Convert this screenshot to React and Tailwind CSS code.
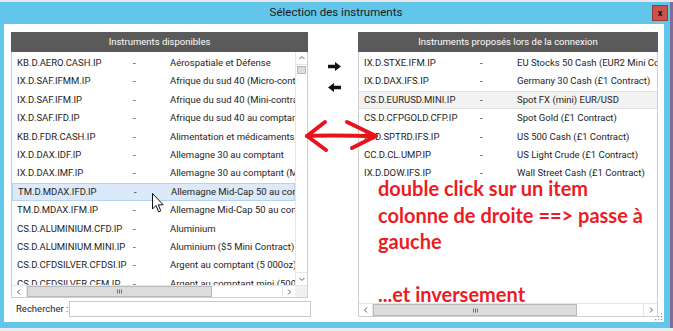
import React from "react";

const leftRows = [
  ["KB.D.AERO.CASH.IP", "Aérospatiale et Défense"],
  ["IX.D.SAF.IFMM.IP", "Afrique du sud 40 (Micro-contrat)"],
  ["IX.D.SAF.IFM.IP", "Afrique du sud 40 (Mini-contrat)"],
  ["IX.D.SAF.IFD.IP", "Afrique du sud 40 au comptant"],
  ["KB.D.FDR.CASH.IP", "Alimentation et médicaments"],
  ["IX.D.DAX.IDF.IP", "Allemagne 30 au comptant"],
  ["IX.D.DAX.IMF.IP", "Allemagne 30 au comptant (Mini-contrat)"],
  ["TM.D.MDAX.IFD.IP", "Allemagne Mid-Cap 50 au comptant"],
  ["TM.D.MDAX.IFM.IP", "Allemagne Mid-Cap 50 au comptant (Mini)"],
  ["CS.D.ALUMINIUM.CFD.IP", "Aluminium"],
  ["CS.D.ALUMINIUM.MINI.IP", "Aluminium ($5 Mini Contract)"],
  ["CS.D.CFDSILVER.CFDSI.IP", "Argent au comptant (5 000oz)"],
  ["CS.D.CFDSILVER.CFM.IP", "Argent au comptant mini (500oz)"],
];

const rightRows = [
  ["IX.D.STXE.IFM.IP", "EU Stocks 50 Cash (EUR2 Mini Contract)"],
  ["IX.D.DAX.IFS.IP", "Germany 30 Cash (£1 Contract)"],
  ["CS.D.EURUSD.MINI.IP", "Spot FX (mini) EUR/USD"],
  ["CS.D.CFPGOLD.CFP.IP", "Spot Gold (£1 Contract)"],
  ["IX.D.SPTRD.IFS.IP", "US 500 Cash (£1 Contract)"],
  ["CC.D.CL.UMP.IP", "US Light Crude (£1 Contract)"],
  ["IX.D.DOW.IFS.IP", "Wall Street Cash (£1 Contract)"],
];

function Row({ code, desc, variant }) {
  let cls = "border-y border-transparent";
  if (variant === "blue") cls = "border border-[#b3d4f2] bg-[#dbe9f8]";
  if (variant === "gray") cls = "border-y border-[#e0e0e0] bg-[#f2f2f2]";
  return (
    <div className={`flex h-[18.4px] shrink-0 items-center whitespace-nowrap pl-[5px] text-[#1e1e1e] ${cls}`}>
      <div className="w-[116px] shrink-0">{code}</div>
      <div className="w-[37px] shrink-0">-</div>
      <div className="shrink-0">{desc}</div>
    </div>
  );
}

function Chevron({ dir }) {
  const paths = {
    up: "M1.5 5 L4 2.5 L6.5 5",
    down: "M1.5 3 L4 5.5 L6.5 3",
    left: "M5 1.5 L2.5 4 L5 6.5",
    right: "M3 1.5 L5.5 4 L3 6.5",
  };
  return (
    <svg width="8" height="8" viewBox="0 0 8 8">
      <path d={paths[dir]} fill="none" stroke="#606060" strokeWidth="1" />
    </svg>
  );
}

function Grip() {
  return (
    <svg width="7" height="5" viewBox="0 0 7 5">
      <path d="M1.5 0.5 V4.5 M3.5 0.5 V4.5 M5.5 0.5 V4.5" stroke="#707070" strokeWidth="1" />
    </svg>
  );
}

function BlackArrow({ flip }) {
  return (
    <svg width="13" height="9" viewBox="0 0 13 9" className={flip ? "-scale-x-100" : ""}>
      <polygon points="0,2.8 7,2.8 7,0 13,4.5 7,9 7,6.2 0,6.2" fill="#111" />
    </svg>
  );
}

export default function App() {
  return (
    <div className="relative flex h-[331px] w-[673px] flex-col overflow-hidden bg-[#e4e8ec] font-[family-name:Roboto,sans-serif] text-[9.5px]">
      <div className="h-[2px] shrink-0 bg-[#e8e8e8]" />
      <div className="flex h-[326px] shrink-0">
        {/* window */}
        <div className="flex w-[670px] flex-col bg-[#61c6ea] pb-[6px] pl-[4px] pr-[6px]">
          {/* title bar */}
          <div className="grid h-[22px] shrink-0 grid-cols-[1fr_auto_1fr] items-center">
            <div />
            <div className="pl-[4px] text-[11.5px] text-[#1b1b1b]">Sélection des instruments</div>
            <div className="flex justify-end pr-[-2px]">
              <div className="mr-[-4px] flex h-[16px] w-[16px] items-center justify-center border border-[#9a3a36] bg-[#c9534c] text-[9px] font-bold leading-none text-[#111]">
                x
              </div>
            </div>
          </div>
          {/* body */}
          <div className="relative flex h-[298px] shrink-0 bg-white pl-[7px] pr-[6px] pt-[8px]">
            {/* left panel */}
            <div className="flex w-[297px] flex-col">
              <div className="flex h-[20px] shrink-0 items-center justify-center bg-[#5a5a5a] text-white">
                Instruments disponibles
              </div>
              <div className="flex h-[246px] shrink-0 flex-col border border-t-0 border-[#cfcfcf]">
                <div className="flex min-h-0 flex-1">
                  <div className="flex min-w-0 flex-1 flex-col overflow-hidden pt-[2px]">
                    {leftRows.map((r, i) => (
                      <Row key={r[0]} code={r[0]} desc={r[1]} variant={i === 7 ? "blue" : ""} />
                    ))}
                  </div>
                  {/* vertical scrollbar */}
                  <div className="flex w-[12px] shrink-0 flex-col border-l border-[#e6e6e6] bg-white">
                    <div className="flex h-[13px] items-center justify-center border-b border-[#e6e6e6]">
                      <Chevron dir="up" />
                    </div>
                    <div className="mx-[1px] mt-[1px] h-[8px] border border-[#b9b9b9] bg-[#dcdcdc]" />
                    <div className="flex-1" />
                    <div className="flex h-[13px] items-center justify-center border-t border-[#e6e6e6]">
                      <Chevron dir="down" />
                    </div>
                  </div>
                </div>
                {/* horizontal scrollbar */}
                <div className="flex h-[12px] shrink-0 border-t border-[#e6e6e6]">
                  <div className="flex w-[15px] items-center justify-center border-r border-[#e6e6e6] bg-white">
                    <Chevron dir="left" />
                  </div>
                  <div className="flex w-[185px] items-center justify-center border border-[#b9b9b9] bg-[#dcdcdc]">
                    <Grip />
                  </div>
                  <div className="flex-1 bg-white" />
                  <div className="flex w-[13px] items-center justify-center border-l border-[#e6e6e6] bg-white">
                    <Chevron dir="right" />
                  </div>
                  <div className="w-[12px] bg-[#f0f0f0]" />
                </div>
              </div>
              <div className="mt-[3px] flex h-[16px] w-[300px] shrink-0 items-center">
                <div className="w-[58px] shrink-0 pl-[5px] text-[#1e1e1e]">Rechercher :</div>
                <div className="h-[16px] flex-1 border border-[#c8c8c8] bg-white" />
              </div>
            </div>
            {/* middle arrows */}
            <div className="flex w-[50px] shrink-0 flex-col items-center gap-[12px] pl-[2px] pt-[30px]">
              <BlackArrow />
              <BlackArrow flip />
            </div>
            {/* right panel */}
            <div className="flex w-[300px] flex-col">
              <div className="flex h-[20px] shrink-0 items-center justify-center bg-[#5a5a5a] text-white">
                Instruments proposés lors de la connexion
              </div>
              <div className="flex h-[265px] shrink-0 flex-col border border-t-0 border-[#cfcfcf]">
                <div className="flex min-h-0 flex-1 flex-col overflow-hidden pt-[2px]">
                  {rightRows.map((r, i) => (
                    <Row key={r[0]} code={r[0]} desc={r[1]} variant={i === 2 ? "gray" : ""} />
                  ))}
                </div>
                <div className="flex h-[13px] shrink-0 border-t border-[#e6e6e6]">
                  <div className="flex w-[14px] items-center justify-center border-r border-[#e6e6e6] bg-white">
                    <Chevron dir="left" />
                  </div>
                  <div className="flex w-[204px] items-center justify-center border border-[#b9b9b9] bg-[#dcdcdc]">
                    <Grip />
                  </div>
                  <div className="flex-1 bg-white" />
                  <div className="flex w-[14px] items-center justify-center border-l border-[#e6e6e6] bg-white">
                    <Chevron dir="right" />
                  </div>
                </div>
              </div>
            </div>
            {/* resize grip */}
            <svg className="absolute bottom-[1px] right-[1px]" width="8" height="8" viewBox="0 0 8 8">
              <rect x="6" y="0" width="1.3" height="1.3" fill="#9a9a9a" />
              <rect x="3" y="3" width="1.3" height="1.3" fill="#9a9a9a" />
              <rect x="6" y="3" width="1.3" height="1.3" fill="#9a9a9a" />
              <rect x="0" y="6" width="1.3" height="1.3" fill="#9a9a9a" />
              <rect x="3" y="6" width="1.3" height="1.3" fill="#9a9a9a" />
              <rect x="6" y="6" width="1.3" height="1.3" fill="#9a9a9a" />
            </svg>
          </div>
        </div>
        <div className="w-[3px] bg-[#7d6f99]" />
      </div>
      <div className="flex-1 bg-[#e8edf0]" />

      {/* mouse cursor overlay */}
      <svg className="absolute left-[152px] top-[193px]" width="13" height="21" viewBox="0 0 13 21">
        <path d="M0.5 0.5 L0.5 16 L4 12.5 L6.6 18.8 L8.8 17.9 L6.3 11.8 L11.2 11.8 Z" fill="#fff" stroke="#111" strokeWidth="1" strokeLinejoin="round" />
      </svg>

      {/* red double arrow annotation */}
      <svg className="absolute left-[300px] top-[114px]" width="90" height="45" viewBox="0 0 90 45">
        <g fill="none" stroke="#e8141c" strokeWidth="4" strokeLinecap="round" strokeLinejoin="round">
          <path d="M7 22 C 30 21, 55 22, 76 22" />
          <path d="M25 8 L7 22 L26 36" />
          <path d="M47 8 L76 22 L52 34" />
        </g>
      </svg>

      {/* red text annotation */}
      <div className="absolute left-[378px] top-[175px] font-[family-name:Lato,sans-serif] text-[20px] font-bold leading-[26.5px] text-[#ec1c24]">
        <div>double click sur un item</div>
        <div>colonne de droite ==&gt; passe à</div>
        <div>gauche</div>
        <div>&nbsp;</div>
        <div>...et inversement</div>
      </div>
    </div>
  );
}
